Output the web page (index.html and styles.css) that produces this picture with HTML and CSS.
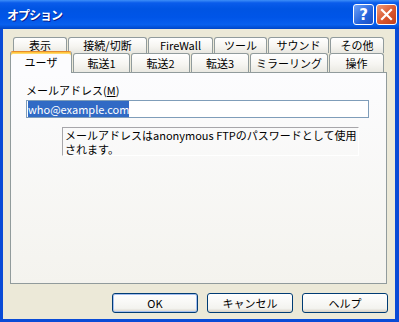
FILE: index.html
```html
<!DOCTYPE html>
<html lang="ja">
<head>
    <meta charset="UTF-8">
    <title>オプション</title>
    <link rel="stylesheet" href="styles.css">
</head>
<body>
    <div class="window">
        <div class="titlebar">
            <span class="title">オプション</span>
            <div class="caption-btns">
                <span class="cap-btn help">?</span>
                <span class="cap-btn close">
                    <svg width="13" height="13" viewBox="0 0 13 13">
                        <path d="M2 2 L11 11 M11 2 L2 11" stroke="#fff" stroke-width="2.2" stroke-linecap="square"/>
                    </svg>
                </span>
            </div>
        </div>

        <div class="client">
            <div class="tab-row back">
                <div class="tab">表示</div>
                <div class="tab">接続/切断</div>
                <div class="tab">FireWall</div>
                <div class="tab">ツール</div>
                <div class="tab">サウンド</div>
                <div class="tab">その他</div>
            </div>
            <div class="tab-row front">
                <div class="tab active">ユーザ</div>
                <div class="tab">転送1</div>
                <div class="tab">転送2</div>
                <div class="tab">転送3</div>
                <div class="tab">ミラーリング</div>
                <div class="tab">操作</div>
            </div>

            <div class="panel">
                <div class="label">メールアドレス(<u>M</u>)</div>
                <div class="field"><span class="sel">who@example.com</span></div>
                <div class="note">メールアドレスはanonymous FTPのパスワードとして使用<br>されます。</div>
            </div>

            <div class="buttons">
                <button class="btn default">OK</button>
                <button class="btn">キャンセル</button>
                <button class="btn">ヘルプ</button>
            </div>
        </div>
    </div>
</body>
</html>
```

FILE: styles.css
```css
* { box-sizing: border-box; }
html, body { margin: 0; padding: 0; }
body {
    width: 399px;
    height: 322px;
    overflow: hidden;
    font-family: "Noto Sans CJK JP", "DejaVu Sans", sans-serif;
    font-size: 11px;
    color: #000;
    background: #ECE9D8;
}
.window {
    display: flex;
    flex-direction: column;
    height: 322px;
}

/* title bar */
.titlebar {
    height: 29px;
    display: flex;
    align-items: center;
    justify-content: space-between;
    padding: 0 2px 0 7px;
    background: linear-gradient(#3D8EF8 0%, #0A5CEB 10%, #0054E3 30%, #0055E8 60%, #0860EE 85%, #0046C8 100%);
}
.title {
    color: #fff;
    font-weight: bold;
    font-size: 12px;
    letter-spacing: -1px;
    text-shadow: 1px 1px 0 #0A1E8C;
}
.caption-btns {
    display: flex;
    gap: 2px;
}
.cap-btn {
    width: 21px;
    height: 21px;
    border: 1px solid #fff;
    border-radius: 3px;
    display: flex;
    align-items: center;
    justify-content: center;
}
.help {
    background: linear-gradient(135deg, #6FA2F8, #2463DB 60%, #1A4FC4);
    color: #fff;
    font: bold 15px "DejaVu Sans", sans-serif;
}
.close {
    background: linear-gradient(135deg, #EE9A78, #D9562E 55%, #C2401A);
}

/* client area */
.client {
    flex: 1;
    display: flex;
    flex-direction: column;
    padding-top: 8px;
    background: #ECE9D8;
    border: solid #0A4BD6;
    border-width: 0 4px 3px 3px;
}

/* tabs */
.tab-row { display: grid; column-gap: 1px; }
.back {
    margin-left: 10px;
    height: 16px;
    grid-template-columns: 54px 79px 65px 53px 61px 54px;
}
.front {
    margin-left: 7px;
    height: 19px;
    grid-template-columns: 62px 57px 59px 58px 78px 55px;
}
.tab {
    border: 1px solid #919B9C;
    border-bottom: none;
    border-radius: 3px 3px 0 0;
    background: linear-gradient(#FFFFFF, #F6F5F1 55%, #E8E7E0);
    text-align: center;
    line-height: 14px;
    white-space: nowrap;
    overflow: hidden;
}
.back .tab { padding-top: 0; }
.front .tab { padding-top: 2px; }
.front .tab.active {
    position: relative;
    z-index: 1;
    margin-top: -2px;
    height: 22px;
    padding-top: 3px;
    border-top: 1px solid #E68B2C;
    box-shadow: inset 0 1px 0 #FFC73C, inset 0 2px 0 #FFD86E;
    background: #FCFCFE;
}

/* tab page */
.panel {
    margin-left: 7px;
    width: 377px;
    height: 212px;
    padding: 10px 15px 0;
    border: 1px solid #919B9C;
    background: linear-gradient(#FCFCFE, #F4F3EE);
}
.label { line-height: 14px; }
.field {
    margin-top: 3px;
    width: 343px;
    height: 18px;
    padding: 1px 0 0 1px;
    border: 1px solid #7F9DB9;
    background: #fff;
    line-height: 14px;
}
.sel {
    background: #316AC5;
    color: #fff;
}
.note {
    margin: 9px 0 0 36px;
    width: 297px;
    height: 29px;
    padding: 0 0 0 2px;
    border: 1px solid #fff;
    border-top-color: #A7A6AA;
    border-left-color: #A7A6AA;
    line-height: 14px;
}

/* dialog buttons */
.buttons {
    display: flex;
    justify-content: flex-end;
    gap: 9px;
    margin-top: 9px;
    padding-right: 7px;
}
.btn {
    width: 86px;
    height: 20px;
    padding: 0;
    border: 1px solid #003C74;
    border-radius: 3px;
    background: linear-gradient(#FFFFFF, #F3F3EF 80%, #D6D0C5);
    font-family: "Noto Sans CJK JP", "DejaVu Sans", sans-serif;
    font-size: 11px;
    color: #000;
}
.btn.default {
    box-shadow: inset 0 0 0 1px #A4BEEF;
}
```
